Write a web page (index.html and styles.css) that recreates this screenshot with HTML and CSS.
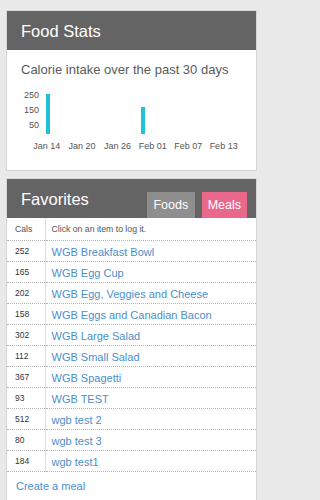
FILE: index.html
```html
<!DOCTYPE html>
<html>
<head>
<meta charset="utf-8">
<link rel="stylesheet" href="styles.css">
</head>
<body>
<div class="page">
  <section class="panel">
    <header class="panel-head">
      <h2 class="panel-title">Food Stats</h2>
    </header>
    <div class="stats-body">
      <p class="subtitle">Calorie intake over the past 30 days</p>
      <div class="chart">
        <div class="plot-row">
          <div class="y-axis"><span>250</span><span>150</span><span>50</span></div>
          <div class="plot">
            <div class="bar" style="left:7px;height:40px"></div>
            <div class="bar" style="left:102px;height:27px"></div>
          </div>
        </div>
        <div class="x-axis">
          <span>Jan 14</span><span>Jan 20</span><span>Jan 26</span><span>Feb 01</span><span>Feb 07</span><span>Feb 13</span>
        </div>
      </div>
    </div>
  </section>

  <section class="panel panel-fav">
    <header class="panel-head fav-head">
      <h2 class="panel-title">Favorites</h2>
      <div class="tabs">
        <span class="tab tab-foods">Foods</span>
        <span class="tab tab-meals">Meals</span>
      </div>
    </header>
    <div class="fav-body">
      <table class="fav-table">
        <thead>
          <tr><th class="c-cals">Cals</th><th class="c-name">Click on an item to log it.</th></tr>
        </thead>
        <tbody>
          <tr><td class="c-cals">252</td><td class="c-name"><a href="#">WGB Breakfast Bowl</a></td></tr>
          <tr><td class="c-cals">165</td><td class="c-name"><a href="#">WGB Egg Cup</a></td></tr>
          <tr><td class="c-cals">202</td><td class="c-name"><a href="#">WGB Egg, Veggies and Cheese</a></td></tr>
          <tr><td class="c-cals">158</td><td class="c-name"><a href="#">WGB Eggs and Canadian Bacon</a></td></tr>
          <tr><td class="c-cals">302</td><td class="c-name"><a href="#">WGB Large Salad</a></td></tr>
          <tr><td class="c-cals">112</td><td class="c-name"><a href="#">WGB Small Salad</a></td></tr>
          <tr><td class="c-cals">367</td><td class="c-name"><a href="#">WGB Spagetti</a></td></tr>
          <tr><td class="c-cals">93</td><td class="c-name"><a href="#">WGB TEST</a></td></tr>
          <tr><td class="c-cals">512</td><td class="c-name"><a href="#">wgb test 2</a></td></tr>
          <tr><td class="c-cals">80</td><td class="c-name"><a href="#">wgb test 3</a></td></tr>
          <tr><td class="c-cals">184</td><td class="c-name"><a href="#">wgb test1</a></td></tr>
        </tbody>
      </table>
      <a class="create" href="#">Create a meal</a>
    </div>
  </section>
</div>
</body>
</html>
```

FILE: styles.css
```css
html, body {
  margin: 0;
  padding: 0;
}
body {
  background: #e9e9e9;
  font-family: "Liberation Sans", Arial, sans-serif;
  color: #555;
  overflow: hidden;
}
.page {
  padding-top: 10px;
}
.panel {
  box-sizing: border-box;
  margin-left: 6px;
  width: 251px;
  background: #fff;
  border: 1px solid #d6d6d6;
}
.panel-fav {
  margin-top: 7px;
}
.panel-head {
  background: #646464;
  height: 39px;
  display: flex;
  align-items: center;
  padding-left: 14px;
}
.panel-title {
  margin: 0;
  font-weight: normal;
  font-size: 16.5px;
  color: #fff;
  line-height: 20px;
}
.stats-body {
  padding: 12px 14px 18px 14px;
}
.subtitle {
  margin: 0;
  font-size: 13px;
  line-height: 16px;
  color: #5a5a5a;
}
.chart {
  margin-top: 10px;
}
.plot-row {
  display: flex;
  height: 46px;
}
.y-axis {
  width: 18px;
  display: flex;
  flex-direction: column;
  align-items: flex-end;
  font-size: 9px;
  line-height: 15px;
  color: #555;
}
.plot {
  flex: 1;
  position: relative;
}
.bar {
  position: absolute;
  bottom: 0;
  width: 4px;
  background: #1fc2d9;
}
.x-axis {
  display: flex;
  margin-left: 8px;
  margin-top: 6px;
  font-size: 9px;
  line-height: 12px;
  color: #555;
}
.x-axis span {
  width: 35.4px;
  flex: none;
  text-align: center;
  white-space: nowrap;
}
.fav-head {
  align-items: stretch;
}
.fav-head .panel-title {
  align-self: center;
}
.tabs {
  margin-left: auto;
  margin-right: 9px;
  align-self: flex-end;
  display: flex;
  gap: 7px;
}
.tab {
  height: 26px;
  line-height: 26px;
  font-size: 12.5px;
  color: #fff;
  padding: 0 6px;
}
.tab-foods {
  background: #8e8e8e;
  padding: 0 6.5px;
}
.tab-meals {
  background: #e9688b;
}
.fav-body {
  padding-bottom: 10px;
}
.fav-table {
  width: 100%;
  border-collapse: collapse;
}
.fav-table th,
.fav-table td {
  padding: 0;
  text-align: left;
  font-weight: normal;
  border-bottom: 1px dotted #b5b5b5;
  white-space: nowrap;
}
.fav-table th {
  height: 22px;
  font-size: 8.7px;
  color: #555;
}
.fav-table td {
  height: 20px;
}
.c-cals {
  width: 38px;
  box-sizing: border-box;
  padding-left: 8px !important;
  border-right: 1px solid #dcdcdc;
  font-size: 8.5px;
  color: #333;
}
.fav-table th.c-cals {
  color: #555;
}
.c-name {
  padding-left: 6px !important;
}
.c-name a {
  font-size: 11px;
  color: #4a8fca;
  text-decoration: none;
}
.create {
  display: block;
  margin-top: 8px;
  margin-left: 9px;
  font-size: 11px;
  line-height: 13px;
  color: #4a8fca;
  text-decoration: none;
}
```
